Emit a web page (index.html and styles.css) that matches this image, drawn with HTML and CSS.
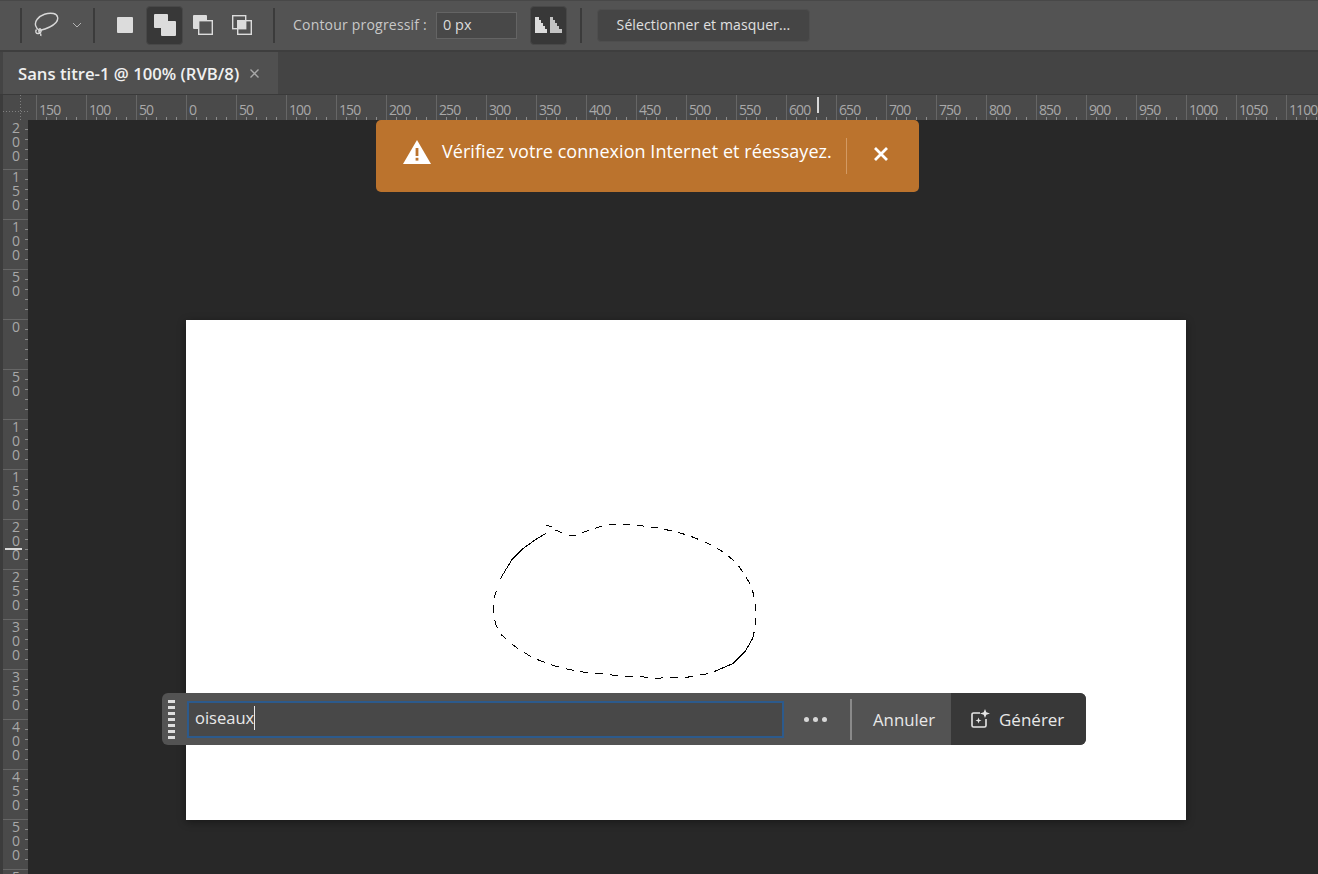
FILE: index.html
```html
<!DOCTYPE html>
<html lang="fr">
<head>
  <meta charset="utf-8">
  <title>Sans titre-1 @ 100% (RVB/8)</title>
  <link rel="stylesheet" href="styles.css">
</head>
<body>
  <div class="options-bar">
    <span class="sep sep-first"></span>
    <svg class="lasso-icon" width="26" height="26" viewBox="0 0 26 26" fill="none" stroke="#d8d8d8" stroke-width="1.4">
      <path d="M6.5 18.5C2.5 16 1 11.5 4 7.5 7.5 2.5 15 .5 20.5 1.500 25 2.500 26 7 23 10.500 19.500 14.500 13 17 6.500 18.500Z"/>
      <path d="M3.500 17.500c-1.500 2-.5 4.500 2 4s3.500-3 2-4.500c-1-1-3 1.500-.5 4 1 1 1 2 .8 3"/>
    </svg>
    <svg class="chevron" width="10" height="6" viewBox="0 0 10 6" fill="none" stroke="#b4b4b4" stroke-width="1"><path d="M1 1l4 4 4-4"/></svg>
    <span class="sep sep-second"></span>

    <svg class="mode-icon mode-new" width="16" height="16" viewBox="0 0 16 16"><rect width="16" height="16" rx="1" fill="#dcdcdc"/></svg>
    <span class="mode-active">
      <svg width="22" height="22" viewBox="0 0 22 22" fill="#dcdcdc"><rect x="0" y="0" width="14" height="14" rx="1"/><rect x="7" y="7" width="15" height="15" rx="1"/></svg>
    </span>
    <svg class="mode-icon mode-sub" width="20" height="20" viewBox="0 0 20 20"><rect width="14" height="14" rx="1" fill="#dcdcdc"/><rect x="5.700" y="5.700" width="13.600" height="13.600" fill="#535353" stroke="#dcdcdc" stroke-width="1.400"/></svg>
    <svg class="mode-icon mode-int" width="20" height="20" viewBox="0 0 20 20" fill="none" stroke="#dcdcdc" stroke-width="1.400"><rect x=".7" y=".7" width="13" height="13"/><rect x="5.700" y="5.700" width="13.600" height="13.600"/><rect x="6" y="6" width="8" height="8" fill="#dcdcdc" stroke="none"/></svg>
    <span class="sep sep-third"></span>

    <span class="opt-label">Contour progressif :</span>
    <span class="opt-input"><span class="opt-value">0 px</span></span>
    <span class="smooth-btn">
      <svg width="27" height="16" viewBox="0 0 27 16" fill="#dcdcdc"><path d="M0 0h4v3h2v3h2v3h2v3h2v4H0z"/><path d="M15 0h3v3h2v3h2v3h2v3h3v4H15z" opacity=".85"/></svg>
    </span>
    <span class="sep sep-fourth"></span>
    <span class="mask-btn"><span class="mask-label">Sélectionner et masquer...</span></span>
  </div>

  <div class="tab-bar">
    <div class="tab">
      <span class="tab-title">Sans titre-1 @ 100% (RVB/8)</span>
      <svg width="9" height="9" viewBox="0 0 9 9" stroke="#a8a8a8" stroke-width="1.400"><path d="M.5.500l8 8M8.500.500l-8 8"/></svg>
    </div>
  </div>

  <div class="h-ruler-row">
    <div class="ruler-corner"></div>
    <div class="h-ruler">
      <span class="h-tick">150</span><span class="h-tick">100</span><span class="h-tick">50</span><span class="h-tick">0</span>
      <span class="h-tick">50</span><span class="h-tick">100</span><span class="h-tick">150</span><span class="h-tick">200</span>
      <span class="h-tick">250</span><span class="h-tick">300</span><span class="h-tick">350</span><span class="h-tick">400</span>
      <span class="h-tick">450</span><span class="h-tick">500</span><span class="h-tick">550</span><span class="h-tick">600</span>
      <span class="h-tick">650</span><span class="h-tick">700</span><span class="h-tick">750</span><span class="h-tick">800</span>
      <span class="h-tick">850</span><span class="h-tick">900</span><span class="h-tick">950</span><span class="h-tick">1000</span>
      <span class="h-tick">1050</span><span class="h-tick">1100</span>
    </div>
    <span class="h-marker"></span>
  </div>

  <div class="workspace">
    <div class="v-ruler">
      <div class="v-tick v-first"><span>200</span></div>
      <div class="v-tick"><span>150</span></div>
      <div class="v-tick"><span>100</span></div>
      <div class="v-tick"><span>50</span></div>
      <div class="v-tick"><span>0</span></div>
      <div class="v-tick"><span>50</span></div>
      <div class="v-tick"><span>100</span></div>
      <div class="v-tick"><span>150</span></div>
      <div class="v-tick"><span>200</span></div>
      <div class="v-tick"><span>250</span></div>
      <div class="v-tick"><span>300</span></div>
      <div class="v-tick"><span>350</span></div>
      <div class="v-tick"><span>400</span></div>
      <div class="v-tick"><span>450</span></div>
      <div class="v-tick"><span>500</span></div>
      <div class="v-tick"><span>550</span></div>
      <span class="v-marker"></span>
    </div>

    <div class="canvas-area">
      <div class="document">
        <svg class="selection" width="290" height="180" viewBox="0 0 870 540" fill="none" stroke="#000" stroke-width="3" shape-rendering="crispEdges">
          <polyline points="198,46 216,50"/>
          <polyline stroke-dasharray="22 20" points="226,60 245,68 270,76 288,75 330,60 360,50 395,43 440,44 490,48 540,55 585,65 625,76 660,90 690,103 720,120 745,138 770,160 790,188 808,218 820,250 827,290 826,350 818,385"/>
          <polyline points="818,385 795,425 760,460 725,475"/>
          <polyline stroke-dasharray="24 21" points="725,475 690,490 660,495 620,502 570,503 520,505 470,498 420,498 370,492 330,489 290,483 250,475 215,465 180,452 150,438 120,420 90,398 65,375 48,345 40,310 40,270 50,240"/>
          <polyline points="60,208 95,150 130,115 165,90 198,70"/>
        </svg>
      </div>

      <div class="toast">
        <svg class="toast-warn" width="28" height="24" viewBox="0 0 28 24"><path d="M14 0L28 24H0z" fill="#fff"/><rect x="12.600" y="8" width="2.800" height="8" fill="#bb732d"/><rect x="12.600" y="17.800" width="2.800" height="2.800" fill="#bb732d"/></svg>
        <span class="toast-text">Vérifiez votre connexion Internet et réessayez.</span>
        <span class="toast-divider"></span>
        <svg class="toast-close" width="14" height="14" viewBox="0 0 14 14" stroke="#fff" stroke-width="2.800"><path d="M1 1l12 12M13 1L1 13"/></svg>
      </div>

      <div class="prompt-bar">
        <div class="grip"><i></i><i></i><i></i><i></i><i></i><i></i><i></i></div>
        <div class="prompt-input"><span class="prompt-text">oiseaux</span><span class="caret"></span></div>
        <div class="more-dots"><i></i><i></i><i></i></div>
        <span class="prompt-sep"></span>
        <span class="cancel-btn">Annuler</span>
        <div class="generate-btn">
          <svg width="20" height="20" viewBox="0 0 20 20" fill="none" stroke="#e6e6e6" stroke-width="1.600">
            <path d="M10 4H3.500A1.500 1.500 0 0 0 2 5.500v11A1.500 1.500 0 0 0 3.500 18h11a1.500 1.500 0 0 0 1.500-1.500V10"/>
            <path d="M15 0l1.300 3.200 3.700 1.300-3.700 1.300L15 9l-1.300-3.200-3.700-1.300 3.700-1.300z" fill="#e6e6e6" stroke="none"/>
            <path d="M8.500 8.500l.8 2.200 2.200.8-2.200.8-.8 2.200-.8-2.200-2.200-.8 2.200-.8z" fill="#e6e6e6" stroke="none"/>
          </svg>
          <span>Générer</span>
        </div>
      </div>
    </div>
  </div>
</body>
</html>
```

FILE: styles.css
```css
* {
  box-sizing: border-box;
}

body {
  margin: 0;
  width: 1318px;
  height: 874px;
  overflow: hidden;
  background-color: #282828;
  color: #dcdcdc;
  font-family: 'Open Sans', 'Noto Sans', sans-serif;
  font-size: 14px;
}

/* options bar */
.options-bar {
  display: flex;
  align-items: center;
  height: 52px;
  padding-bottom: 1px;
  background-color: #535353;
  border-top: 1px solid #484848;
  border-bottom: 2px solid #3e3e3e;
}

.sep {
  width: 2px;
  height: 35px;
  background-color: #3b3b3b;
  flex: none;
}

.sep-first { margin-left: 20px; }
.sep-second { margin-left: 11px; }
.sep-third { margin-left: 21px; }
.sep-fourth { margin-left: 13px; }

.lasso-icon {
  margin-left: 11px;
}

.chevron {
  margin-left: 13px;
}

.mode-icon {
  flex: none;
}

.mode-new { margin-left: 22px; }
.mode-sub { margin-left: 10px; }
.mode-int { margin-left: 19px; }

.mode-active {
  display: flex;
  align-items: center;
  justify-content: center;
  width: 37px;
  height: 39px;
  margin-left: 13px;
  background-color: #383838;
  border: 1px solid #484848;
  border-radius: 4px;
}

.opt-label {
  margin-left: 18px;
  margin-top: -2px;
  color: #c8c8c8;
  font-size: 14px;
  letter-spacing: 0.2px;
}

.opt-input {
  display: flex;
  align-items: center;
  width: 81px;
  height: 27px;
  margin-left: 9px;
  padding-left: 6px;
  background-color: #484848;
  border: 1px solid #646464;
  font-size: 14.500px;
}

.opt-value {
  margin-top: -1px;
}

.smooth-btn {
  display: flex;
  align-items: center;
  justify-content: center;
  width: 37px;
  height: 39px;
  margin-left: 13px;
  background-color: #383838;
  border: 1px solid #484848;
  border-radius: 4px;
}

.mask-btn {
  display: flex;
  align-items: center;
  justify-content: center;
  width: 213px;
  height: 33px;
  margin-left: 15px;
  background-color: #454545;
  border: 1px solid #4e4e4e;
  border-radius: 4px;
  color: #e0e0e0;
  font-size: 14px;
  letter-spacing: 0.12px;
}

.mask-label {
  margin-top: -2px;
}

/* tabs */
.tab-bar {
  display: flex;
  height: 43px;
  padding-left: 3px;
  background-color: #444444;
  border-bottom: 1px solid #3a3a3a;
}

.tab {
  display: flex;
  align-items: center;
  gap: 11px;
  width: 275px;
  padding-left: 15px;
  background-color: #505050;
}

.tab-title {
  color: #f0f0f0;
  font-size: 16.700px;
  font-weight: 600;
  white-space: nowrap;
}

/* rulers */
.h-ruler-row {
  position: relative;
  display: flex;
  height: 25px;
  padding-left: 3px;
  background-color: #3c3c3c;
}

.ruler-corner {
  flex: none;
  width: 25px;
  background-color: #4a4a4a;
  background-image:
    repeating-linear-gradient(to right, #808080 0 1px, transparent 1px 3px),
    repeating-linear-gradient(to bottom, #808080 0 1px, transparent 1px 3px);
  background-size: 25px 1px, 1px 25px;
  background-position: 0 16px, 17px 0;
  background-repeat: no-repeat;
}

.h-ruler {
  display: flex;
  flex: 1;
  padding-left: 8px;
  overflow: hidden;
  background-color: #4a4a4a;
  background-image: repeating-linear-gradient(to right, #8a8a8a 0 1px, transparent 1px 10px);
  background-size: 100% 3px;
  background-position: 8px bottom;
  background-repeat: no-repeat;
}

.h-tick {
  flex: none;
  width: 50px;
  padding-left: 2px;
  border-left: 1px solid #666666;
  color: #a8a8a8;
  font-size: 14px;
  line-height: 30px;
  letter-spacing: -0.9px;
  white-space: nowrap;
}

.h-marker {
  position: absolute;
  left: 817px;
  top: 2px;
  width: 2px;
  height: 16px;
  background-color: #d8d8d8;
}

.workspace {
  display: flex;
  height: 754px;
}

.v-ruler {
  position: relative;
  flex: none;
  width: 28px;
  overflow: hidden;
  border-left: 3px solid #3c3c3c;
  background-color: #4a4a4a;
}

.v-tick {
  height: 50px;
  padding: 0 0 0 9px;
  border-top: 1px solid #666666;
  background-image: repeating-linear-gradient(to bottom, transparent 0 9px, #8a8a8a 9px 10px);
  background-size: 3px 100%;
  background-position: right top;
  background-repeat: no-repeat;
  color: #a8a8a8;
  font-size: 14px;
  line-height: 14px;
}

.v-tick span {
  display: block;
  width: 9px;
  word-break: break-all;
}

.v-first {
  height: 49px;
  padding-top: 1px;
  border-top: none;
}

.v-marker {
  position: absolute;
  left: 2px;
  top: 428px;
  width: 17px;
  height: 2px;
  background-color: #d8d8d8;
}

/* canvas */
.canvas-area {
  position: relative;
  flex: 1;
  padding: 200px 0 0 158px;
  background-color: #282828;
}

.document {
  position: relative;
  width: 1000px;
  height: 500px;
  background-color: #ffffff;
  box-shadow: 0 2px 8px rgba(0,0,0,0.4);
}

.selection {
  position: absolute;
  left: 294px;
  top: 190px;
}

/* alert */
.toast {
  position: absolute;
  left: 348px;
  top: 0;
  display: flex;
  align-items: center;
  width: 543px;
  height: 72px;
  padding-left: 27px;
  background-color: #bb732d;
  border-radius: 5px;
  color: #fff;
}

.toast-text {
  margin-left: 11px;
  margin-top: -10px;
  font-size: 18px;
  letter-spacing: 0.05px;
  white-space: nowrap;
}

.toast-divider {
  width: 1px;
  height: 36px;
  margin-left: 14px;
  background-color: #d39a63;
}

.toast-close {
  margin-left: 27px;
  margin-top: -4px;
}

.toast-warn {
  margin-top: -9px;
}

/* floating prompt bar */
.prompt-bar {
  position: absolute;
  left: 134px;
  top: 573px;
  display: flex;
  align-items: center;
  width: 924px;
  height: 52px;
  background-color: #535353;
  border-radius: 6px;
}

.grip {
  display: flex;
  flex-direction: column;
  gap: 3px;
  width: 25px;
  padding-left: 6px;
}

.grip i {
  width: 7px;
  height: 3px;
  background-color: #dedede;
}

.prompt-input {
  display: flex;
  align-items: center;
  width: 597px;
  height: 37px;
  padding-left: 6px;
  background-color: #484848;
  border: 2px solid #2c5a8c;
  color: #e8e8e8;
  font-size: 16.500px;
}

.prompt-text {
  margin-top: -3px;
}

.caret {
  width: 1px;
  height: 24px;
  margin-top: -3px;
  background-color: #e8e8e8;
}

.more-dots {
  display: flex;
  gap: 4px;
  margin-left: 20px;
}

.more-dots i {
  width: 5px;
  height: 5px;
  border-radius: 50%;
  background-color: #d8d8d8;
}

.prompt-sep {
  width: 2px;
  height: 41px;
  margin-left: 23px;
  background-color: #8a8a8a;
}

.cancel-btn {
  margin-left: 21px;
  color: #e8e8e8;
  font-size: 16.800px;
}

.generate-btn {
  display: flex;
  align-items: center;
  gap: 9px;
  height: 52px;
  margin-left: auto;
  width: 135px;
  padding-left: 19px;
  background-color: #383838;
  border-radius: 0 6px 6px 0;
  color: #e8e8e8;
  font-size: 17px;
}
```
